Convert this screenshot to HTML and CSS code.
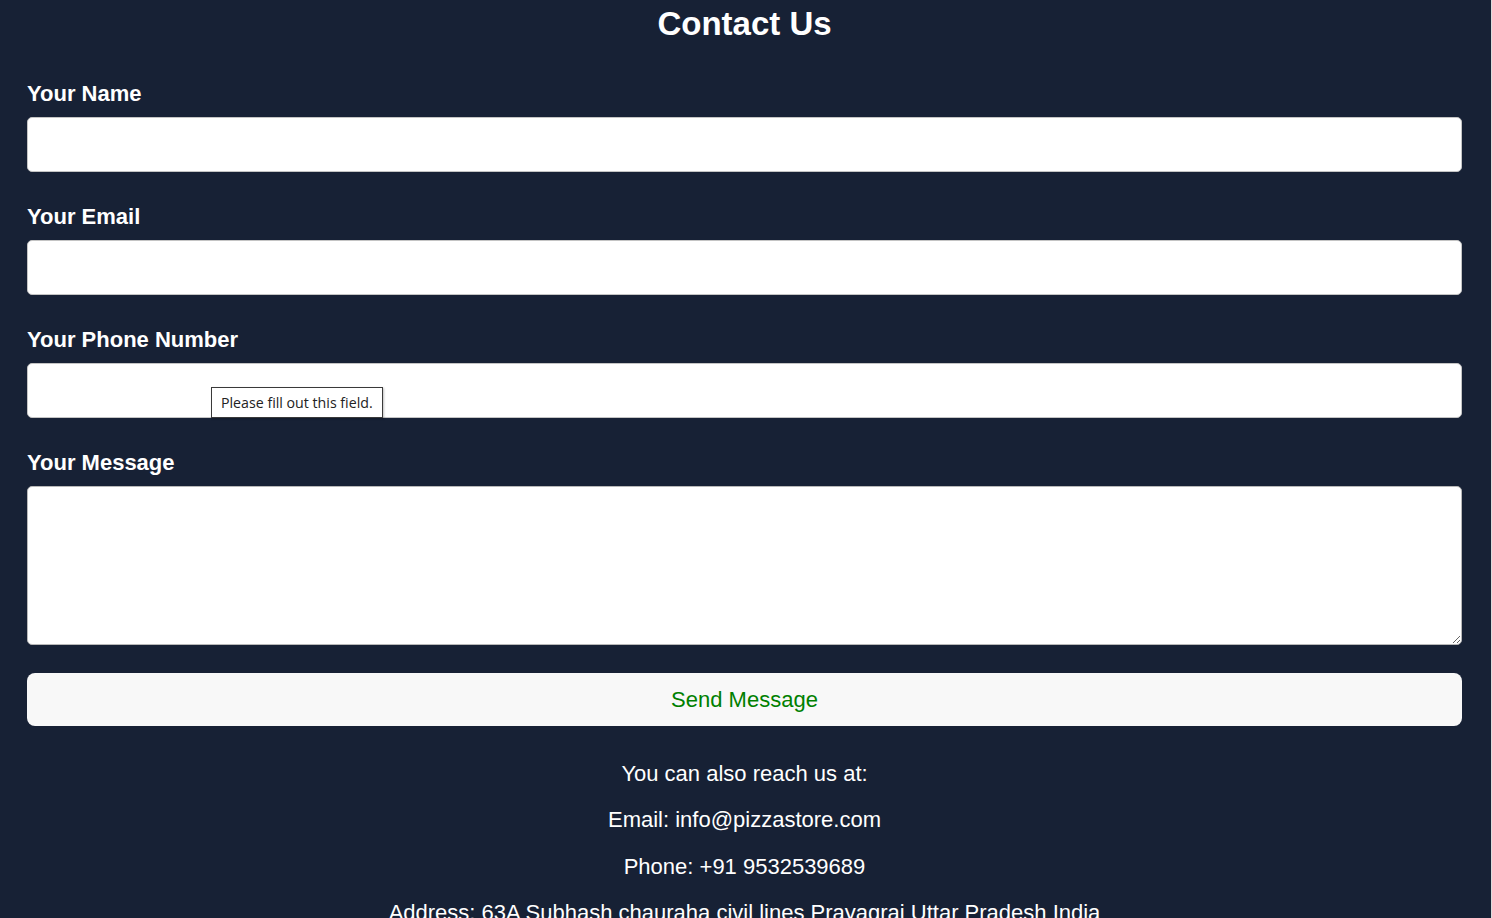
FILE: index.html
```html
<!DOCTYPE html>
<html lang="en">
<head>
<meta charset="utf-8">
<title>Contact Us</title>
<link rel="stylesheet" href="styles.css">
</head>
<body>
<main class="page">
  <h1 class="title">Contact Us</h1>
  <form class="form">
    <div class="field">
      <label class="label" for="name">Your Name</label>
      <input class="input" id="name" type="text">
    </div>
    <div class="field">
      <label class="label" for="email">Your Email</label>
      <input class="input" id="email" type="email">
    </div>
    <div class="field">
      <label class="label" for="phone">Your Phone Number</label>
      <div class="input-wrap">
        <input class="input" id="phone" type="tel">
        <div class="tooltip">Please fill out this field.</div>
      </div>
    </div>
    <div class="field">
      <label class="label" for="msg">Your Message</label>
      <textarea class="textarea" id="msg"></textarea>
    </div>
    <button class="send" type="button">Send Message</button>
  </form>
  <div class="contact">
    <p>You can also reach us at:</p>
    <p>Email: info@pizzastore.com</p>
    <p>Phone: +91 9532539689</p>
    <p>Address: 63A Subhash chauraha civil lines Prayagraj Uttar Pradesh India</p>
  </div>
</main>
</body>
</html>
```
FILE: styles.css
```css
html, body {
  margin: 0;
  padding: 0;
  height: 100%;
  overflow: hidden;
}
body {
  background: #dcdcdc;
  font-family: "Liberation Sans", Arial, sans-serif;
  color: #ffffff;
}
.page {
  box-sizing: border-box;
  min-height: 100%;
  margin-right: 1px;
  background: #172135;
  padding: 5px 29px 0 27px;
}
.title {
  margin: 0 0 38px;
  text-align: center;
  font-size: 33px;
  line-height: 38px;
  font-weight: bold;
}
.form {
  display: flex;
  flex-direction: column;
}
.field {
  display: flex;
  flex-direction: column;
  margin-bottom: 32px;
}
.field:nth-child(4) {
  margin-bottom: 28px;
}
.label {
  font-size: 22px;
  line-height: 25px;
  font-weight: bold;
  margin-bottom: 11px;
}
.input-wrap {
  position: relative;
}
.input {
  display: block;
  box-sizing: border-box;
  width: 100%;
  height: 55px;
  border: 1px solid #c4c4c4;
  border-radius: 5px;
  background: #ffffff;
  margin: 0;
}
.textarea {
  display: block;
  box-sizing: border-box;
  width: 100%;
  height: 159px;
  border: 1px solid #b8b8b8;
  border-radius: 5px;
  background: #ffffff;
  margin: 0;
  resize: vertical;
}
.tooltip {
  position: absolute;
  left: 184px;
  top: 24px;
  box-sizing: border-box;
  width: 172px;
  height: 31px;
  border: 1px solid #3a3a3a;
  background: #ffffff;
  color: #222222;
  font-family: "Open Sans", "Noto Sans", sans-serif;
  font-size: 14.2px;
  line-height: 29px;
  padding-left: 9px;
  white-space: nowrap;
  box-shadow: 1px 1px 2px rgba(0, 0, 0, 0.25);
}
.send {
  display: block;
  width: 100%;
  height: 53px;
  border: none;
  border-radius: 8px;
  background: #f8f8f8;
  color: #008000;
  font-family: "Liberation Sans", Arial, sans-serif;
  font-size: 22px;
  cursor: pointer;
}
.contact {
  padding-top: 13px;
  text-align: center;
}
.contact p {
  margin: 21.5px 0;
  font-size: 22px;
  line-height: 25px;
}
```
